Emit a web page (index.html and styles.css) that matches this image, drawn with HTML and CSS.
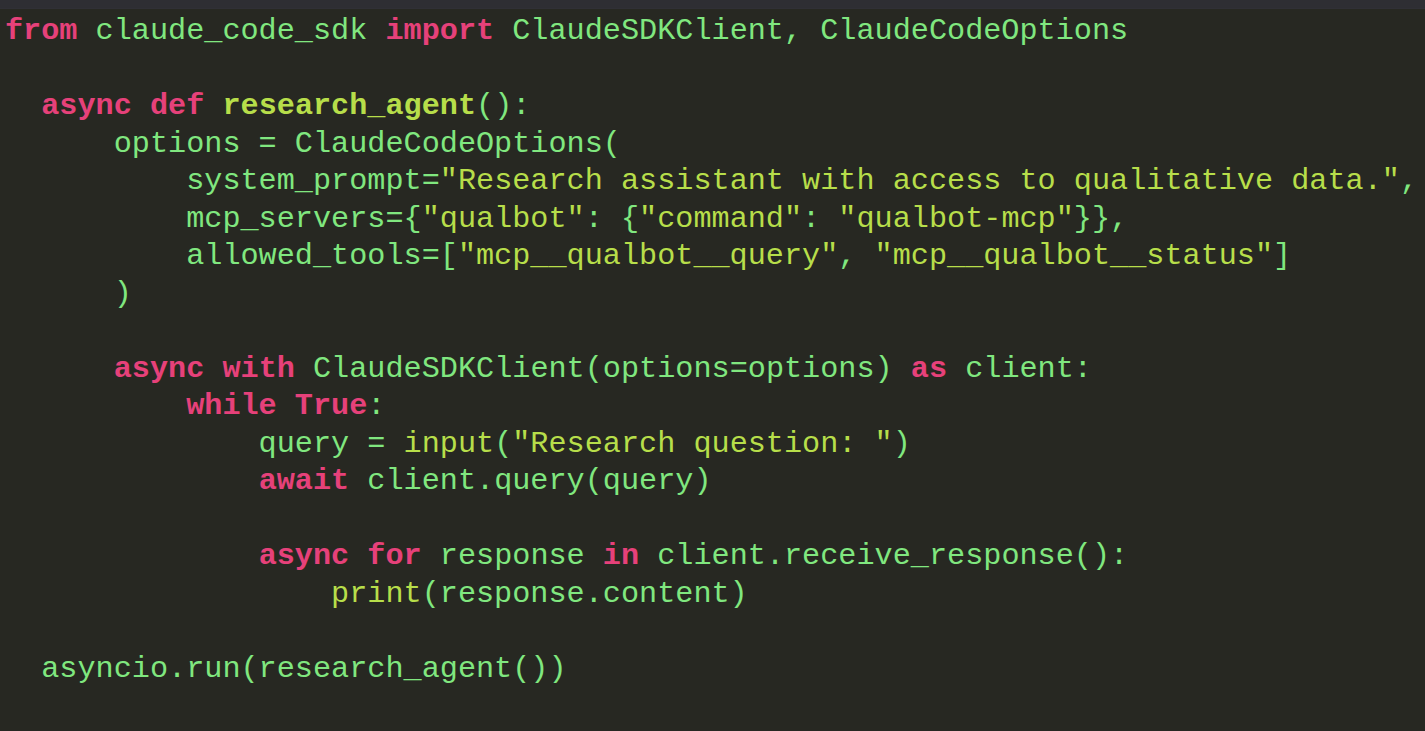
FILE: index.html
```html
<!DOCTYPE html>
<html>
<head>
<meta charset="utf-8">
<link rel="stylesheet" href="styles.css">
</head>
<body>
<div class="topbar"></div>
<pre class="code"><span class="k">from</span> claude_code_sdk <span class="k">import</span> ClaudeSDKClient, ClaudeCodeOptions

  <span class="k">async</span> <span class="k">def</span> <span class="fn">research_agent</span>():
      options = ClaudeCodeOptions(
          system_prompt=<span class="s">"Research assistant with access to qualitative data."</span>,
          mcp_servers={<span class="s">"qualbot"</span>: {<span class="s">"command"</span>: <span class="s">"qualbot-mcp"</span>}},
          allowed_tools=[<span class="s">"mcp__qualbot__query"</span>, <span class="s">"mcp__qualbot__status"</span>]
      )

      <span class="k">async</span> <span class="k">with</span> ClaudeSDKClient(options=options) <span class="k">as</span> client:
          <span class="k">while</span> <span class="k">True</span>:
              query = <span class="b">input</span>(<span class="s">"Research question: "</span>)
              <span class="k">await</span> client.query(query)

              <span class="k">async</span> <span class="k">for</span> response <span class="k">in</span> client.receive_response():
                  <span class="b">print</span>(response.content)

  asyncio.run(research_agent())
</pre>
</body>
</html>
```
FILE: styles.css
```css
html, body {
  margin: 0;
  padding: 0;
  background: #272822;
  height: 100%;
  overflow: hidden;
}
.topbar {
  height: 8px;
  background: #2e2e33;
  border-bottom: 1px solid #303036;
}
.code {
  margin: 0;
  padding: 4px 0 0 5px;
  font-family: "Liberation Mono", monospace;
  font-size: 30.2px;
  line-height: 37.5px;
  color: #80e77f;
  white-space: pre;
}
.k {
  color: #e6417a;
  font-weight: bold;
}
.fn {
  color: #b7de4a;
  font-weight: bold;
}
.s {
  color: #b7de4a;
}
.b {
  color: #b7de4a;
}
```
